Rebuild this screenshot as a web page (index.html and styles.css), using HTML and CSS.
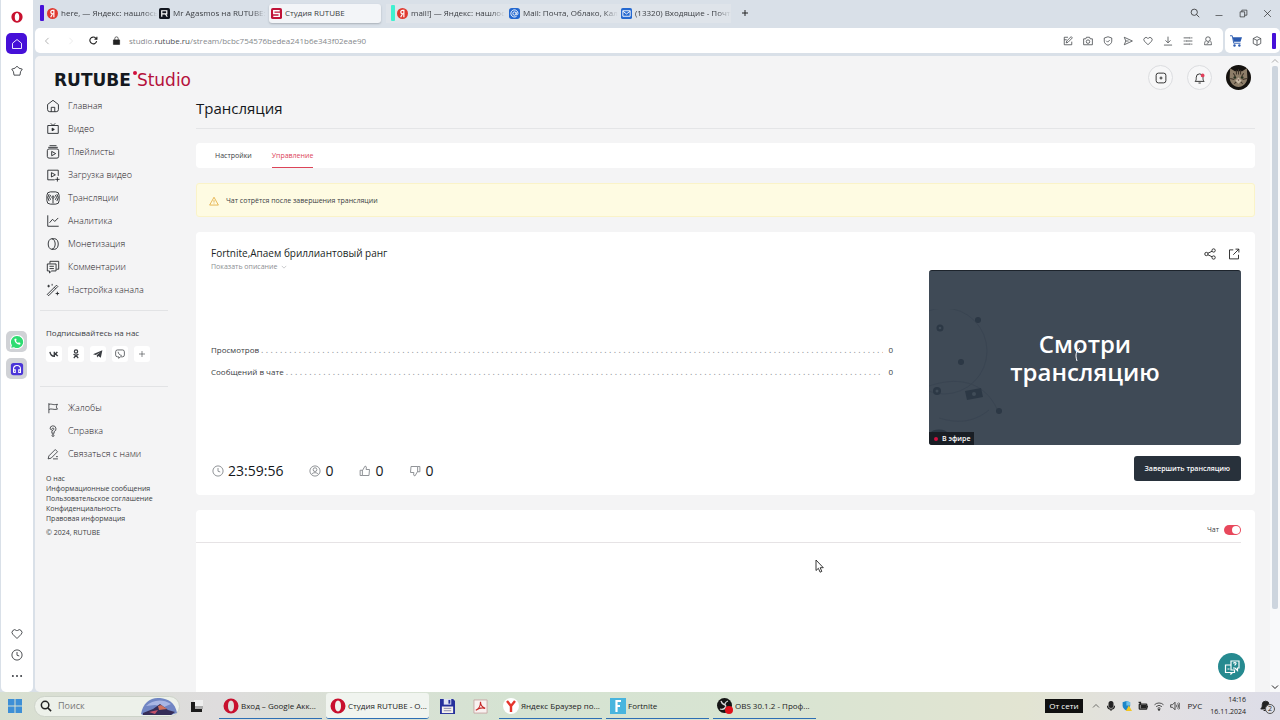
FILE: index.html
```html
<!DOCTYPE html>
<html lang="ru">
<head>
<meta charset="utf-8">
<meta name="viewport" content="width=device-width, initial-scale=1">
<title>Студия RUTUBE</title>
<link rel="stylesheet" href="styles.css">
</head>
<body>
<svg class="sprite" aria-hidden="true">
  <symbol id="opera" viewBox="0 0 16 16"><path fill-rule="evenodd" d="M8 0.5a7.5 7.5 0 1 0 0 15a7.5 7.5 0 1 0 0-15zM8 2.6c2 0 3 2.3 3 5.4s-1 5.4-3 5.4s-3-2.3-3-5.4s1-5.4 3-5.4z" fill="#c8102e" stroke="none"/></symbol>
  <symbol id="home" viewBox="0 0 16 16"><path d="M2 7l6-5l6 5v7H2z"/></symbol>
  <symbol id="star" viewBox="0 0 16 16"><path d="M8 1.500l2.500 2.700l4.500 1.300l-2.300 3.500l-.7 4.500H4L3.300 9L1 5.500l4.500-1.300z"/></symbol>
  <symbol id="heart" viewBox="0 0 16 16"><path d="M8 14L2.4 8.4a3.6 3.6 0 0 1 0-5a3.5 3.5 0 0 1 5 0l.6.6l.6-.6a3.5 3.5 0 0 1 5 0a3.6 3.6 0 0 1 0 5z"/></symbol>
  <symbol id="clock" viewBox="0 0 16 16"><circle cx="8" cy="8" r="6.8"/><path d="M8 4v4.3l3 1"/></symbol>
  <symbol id="dots" viewBox="0 0 16 16"><g fill="currentColor" stroke="none"><circle cx="2.5" cy="8" r="1.3"/><circle cx="8" cy="8" r="1.3"/><circle cx="13.5" cy="8" r="1.3"/></g></symbol>
  <symbol id="search" viewBox="0 0 16 16"><circle cx="6.8" cy="6.8" r="5"/><path d="M10.5 10.5l4.3 4.3"/></symbol>
  <symbol id="minus" viewBox="0 0 16 16"><path d="M1 13h14"/></symbol>
  <symbol id="restore" viewBox="0 0 16 16"><path d="M2 5h8v9H2zM5 5V2h9v9h-4"/></symbol>
  <symbol id="close" viewBox="0 0 16 16"><path d="M2 2l12 12M14 2L2 14"/></symbol>
  <symbol id="plus" viewBox="0 0 16 16"><path d="M8 2v12M2 8h12"/></symbol>
  <symbol id="left" viewBox="0 0 16 16"><path d="M10.5 3L5.5 8l5 5"/></symbol>
  <symbol id="right" viewBox="0 0 16 16"><path d="M5.5 3l5 5l-5 5"/></symbol>
  <symbol id="up" viewBox="0 0 16 16"><path d="M2 11l6-6l6 6"/></symbol>
  <symbol id="down" viewBox="0 0 16 16"><path d="M2 5l6 6l6-6"/></symbol>
  <symbol id="reload" viewBox="0 0 16 16"><path d="M13.5 9a6 6 0 1 1-1.6-5.3l1.6 1.8M14 1.5v4.3h-4.3"/></symbol>
  <symbol id="lock" viewBox="0 0 16 16"><path d="M5 7V4.5a3 3 0 0 1 6 0V7"/><path d="M2.5 7h11v8h-11z" fill="currentColor"/></symbol>
  <symbol id="edit" viewBox="0 0 16 16"><path d="M8 2H2v12h12V9M2 6h4M5 11l1-3l7-7l2 2l-7 7z"/></symbol>
  <symbol id="camera" viewBox="0 0 16 16"><path d="M1 4.5h3.5l1-2.5h5l1 2.5H15V14H1z"/><circle cx="8" cy="9" r="2.8"/></symbol>
  <symbol id="shield" viewBox="0 0 16 16"><path d="M8 1.2l6 2v5c0 3.500-3 5.600-6 6.600c-3-1-6-3.100-6-6.600v-5zM5.200 7.600l2.200 2.200l3.500-3.500"/></symbol>
  <symbol id="send" viewBox="0 0 16 16"><path d="M2 2l13 6L2 14l2.500-6zM4.500 8H9"/></symbol>
  <symbol id="download" viewBox="0 0 16 16"><path d="M8 1v9.500M4 7l4 4l4-4M1.500 14.500h13"/></symbol>
  <symbol id="sliders" viewBox="0 0 16 16"><path d="M1 3h9M13 3h2M1 8h2M6 8h9M1 13h9M13 13h2M11 1.500v3M5 6.500v3M11 11.500v3"/></symbol>
  <symbol id="person" viewBox="0 0 16 16"><circle cx="8" cy="5" r="3.700"/><path d="M4.500 7.500C3 9 2.500 11 2.500 14h11c0-3-.5-5-2-6.500M6 12l4-2"/></symbol>
  <symbol id="cart" viewBox="0 0 16 16"><path d="M0 1h3l2 10h9" stroke="#2a5ab0" fill="none"/><path d="M3.500 3H16l-2 6H5z" fill="#2a5ab0" stroke="none"/><circle cx="6" cy="14" r="1.600" fill="#2a5ab0" stroke="none"/><circle cx="12.500" cy="14" r="1.600" fill="#2a5ab0" stroke="none"/></symbol>
  <symbol id="cube" viewBox="0 0 16 16"><path d="M8 1l6 3v8l-6 3l-6-3V4zM2 4l6 3l6-3M8 7v8"/></symbol>

  <symbol id="n-home" viewBox="0 0 16 16"><path d="M1.800 6.300L8 1.500l6.200 4.800V12a2.500 2.500 0 0 1-2.500 2.500H4.300A2.500 2.500 0 0 1 1.800 12zM6 14.500V9.500h4v5"/></symbol>
  <symbol id="n-video" viewBox="0 0 16 16"><path d="M2 4h12v9H2zM5.500 1.500L8 4l2.500-2.500"/><path d="M7 7l2.500 1.500L7 10z" fill="currentColor"/></symbol>
  <symbol id="n-list" viewBox="0 0 16 16"><rect x="1.500" y="4.500" width="13" height="10.500" rx="2"/><path d="M2.500 2.700h11M4 .8h8M6.500 7.300l4.500 2.500l-4.500 2.500z"/></symbol>
  <symbol id="n-upload" viewBox="0 0 16 16"><path d="M14 9V2.500H2v11h8M6.200 5.300l4.500 2.500l-4.500 2.500zM13 10.500v5M10.500 13h5"/></symbol>
  <symbol id="n-live" viewBox="0 0 16 16"><rect x="1" y="1" width="14" height="14" rx="4"/><circle cx="8" cy="7" r="1.300"/><path d="M8 8.300V14M5.300 10a4 4 0 0 1 0-5.500M10.700 10a4 4 0 0 0 0-5.500M3.600 11.500a6.500 6.500 0 0 1 0-8M12.400 11.500a6.500 6.500 0 0 0 0-8"/></symbol>
  <symbol id="n-chart" viewBox="0 0 16 16"><path d="M2 1.500v12.500h12.500M4 10l3.500-4l2.500 2.500l4-4"/></symbol>
  <symbol id="n-coin" viewBox="0 0 16 16"><ellipse cx="6.500" cy="8" rx="4" ry="6"/><path d="M6.500 2h3.500c2.300 0 4 2.700 4 6s-1.700 6-4 6H6.500"/></symbol>
  <symbol id="n-comment" viewBox="0 0 16 16"><path d="M4.500 4V1.500h10v9H12M1.500 4.500h10v8H6.500L4 14.800v-2.300H1.500zM4 7.200h5M4 9.800h5"/></symbol>
  <symbol id="n-wand" viewBox="0 0 16 16"><path d="M1.500 13L12 2.500L13.500 4L3 14.500zM3 2v3M1.500 3.500h3M13 10v4M11 12h4M7 1v2M9.500 5l1.500 1.500"/></symbol>
  <symbol id="n-flag" viewBox="0 0 16 16"><path d="M2.500 1.500v13.500M2.500 3.500c3-2 5 1.200 11.500-.5c-2 3-2 4 0 6.500c-5 1.500-8-1.500-11.500.5"/></symbol>
  <symbol id="n-help" viewBox="0 0 16 16"><path d="M4 5a4 4 0 1 1 5.500 3.800V11h-3V7.500C10 7 9.500 3.700 7.800 4C6.500 4.200 7 6 5.500 6.200z"/><circle cx="8" cy="14" r="1.300"/></symbol>
  <symbol id="n-pen" viewBox="0 0 16 16"><path d="M1.500 14.500l1-4L11 2l3 3l-8.500 8.500zM8 14.500h6.500M12 11.500h2.500"/></symbol>

  <symbol id="s-vk" viewBox="0 0 16 16"><path d="M1.500 4.500c.7 4 3 7 7 7V4.500M8.500 8c2.500-.3 4-2 4.800-3.500M8.500 8c2.500.3 4.500 2 5.500 3.500" stroke-width="2.200"/></symbol>
  <symbol id="s-ok" viewBox="0 0 16 16"><circle cx="8" cy="4" r="2.600" stroke-width="2"/><path d="M4 8.500c2.500 1.700 5.500 1.700 8 0M8 10l-3.500 4.500M8 10l3.500 4.500" stroke-width="2"/></symbol>
  <symbol id="s-tg" viewBox="0 0 16 16"><path d="M0 8.500L15 2l-2.500 12l-4-3l-2 2.500L6 10l5.500-5L4.500 9.700z" fill="currentColor" stroke="none"/></symbol>
  <symbol id="s-viber" viewBox="0 0 16 16"><path d="M4 1.500h8a3 3 0 0 1 3 3v5a3 3 0 0 1-3 3H8.500L6 15v-2.500H4a3 3 0 0 1-3-3v-5a3 3 0 0 1 3-3zM5 4.500c.3 3 2.500 5.500 5.800 5.800"/></symbol>

  <symbol id="addbox" viewBox="0 0 16 16"><rect x="1.500" y="1.500" width="13" height="13" rx="3"/><path d="M8 6v4M6 8h4"/></symbol>
  <symbol id="bell" viewBox="0 0 16 16"><path d="M1.500 12.500h12c-1.500-1.500-1.500-2.500-1.500-5.500a4.500 4.500 0 0 0-9 0c0 3 0 4-1.500 5.500zM6 14.700h3"/><circle cx="11.500" cy="4.500" r="2.500" fill="#e2405c" stroke="none"/></symbol>
  <symbol id="warn" viewBox="0 0 16 16"><path d="M8 2l7 12.500H1zM8 6.500v4M8 12v1"/></symbol>
  <symbol id="share" viewBox="0 0 16 16"><circle cx="3.200" cy="8" r="2.200"/><circle cx="12.800" cy="3.300" r="2.200"/><circle cx="12.800" cy="12.700" r="2.200"/><path d="M5.200 7l5.600-2.700M5.200 9l5.600 2.700"/></symbol>
  <symbol id="open" viewBox="0 0 16 16"><path d="M7 2.500H2v12h12V9M7 9l7.500-7.500M10 1.500h4.500V6"/></symbol>
  <symbol id="viewer" viewBox="0 0 16 16"><circle cx="8" cy="8" r="6.800"/><circle cx="8" cy="6.200" r="2.500"/><path d="M3.500 12.500c1.500-3 7.500-3 9 0"/></symbol>
  <symbol id="like" viewBox="0 0 16 16"><path d="M1.500 7h3v7h-3zM4.500 7.500L8 1.500c2 0 2 1.500 1.500 4.500H14l-.7 8H4.500"/></symbol>
  <symbol id="dislike" viewBox="0 0 16 16"><path d="M14.500 9h-3V2h3zM11.500 8.500L8 14.500c-2 0-2-1.500-1.500-4.500H2l.7-8h8.800"/></symbol>
  <symbol id="faq" viewBox="0 0 16 16"><path d="M7 6.500V2h8v7h-1.500v2.500L11 9H9M1.500 6H7v5h3.500v2.500H8.500L7 15v-1.500H1.500zM9.500 4.500c.5-1.500 2.800-1 2.500.2c-.2.800-1.200.8-1.200 1.800M3.500 10h2"/></symbol>

  <symbol id="mic" viewBox="0 0 16 16"><rect x="5" y="1" width="6" height="9" rx="3" fill="currentColor"/><path d="M2.500 7.500a5.500 5.500 0 0 0 11 0M8 13v2.500"/></symbol>
  <symbol id="defender" viewBox="0 0 16 16"><path d="M7 0l6 2v5c0 4-3 6.500-6 8c-3-1.500-6-4-6-8V2z" fill="#1c86c8" stroke="none"/><path d="M7 0l6 2v5H7z" fill="#6fc0ea" stroke="none"/><path d="M11 7l5 9H6z" fill="#f3c522" stroke="none"/></symbol>
  <symbol id="battery" viewBox="0 0 16 16"><rect x="2" y="5" width="12" height="8" rx="1"/><path d="M5 7.500h7v3.500H5zM15.500 7.500v3" fill="currentColor"/><path d="M1 1.500l4 2.500M4 1v5"/></symbol>
  <symbol id="wifi" viewBox="0 0 16 16"><path d="M.8 6a10.500 10.500 0 0 1 14.400 0M3.300 9a7 7 0 0 1 9.400 0M5.700 11.700a3.500 3.500 0 0 1 4.600 0"/><circle cx="8" cy="13.800" r="1.200" fill="currentColor"/></symbol>
  <symbol id="sound" viewBox="0 0 16 16"><path d="M1 6h3l4-4v12l-4-4H1zM10 6c1 1.200 1 2.800 0 4M12 4c2 2.400 2 5.600 0 8M14 2.500c2.500 3.500 2.500 7.500 0 11"/></symbol>
</svg>

<div class="desktop">
  <aside class="rail">
    <svg class="i i12"><use href="#opera"/></svg>
    <button class="rail-btn active" aria-label="Домой"><svg class="i i12"><use href="#home"/></svg></button>
    <button class="rail-btn" aria-label="Закладки"><svg class="i i12"><use href="#star"/></svg></button>
    <div class="rail-apps">
      <button class="rail-btn app" aria-label="WhatsApp"><svg class="i i14" viewBox="0 0 16 16"><path d="M8 .5a7.500 7.500 0 1 1-3.600 14L.5 15.500l1-3.700A7.500 7.500 0 0 1 8 .5z" fill="#2fdc72" stroke="#fff"/><path d="M5 4.500c0 3.500 3 6.500 6.500 6.500l.5-2l-2-.8l-.8.800C8 8.500 7.300 7.800 6.800 6.600l.8-.8L7 4z" fill="#fff" stroke="none"/></svg></button>
      <button class="rail-btn app" aria-label="Плеер"><svg class="i i14" viewBox="0 0 16 16"><rect x="1" y="1" width="14" height="14" rx="3" fill="#4a35d8" stroke="none"/><path d="M4 12V8a4 4 0 0 1 8 0v4h-2V9h2M4 9h2v3H4" stroke="#fff"/></svg></button>
    </div>
    <div class="rail-bottom">
      <button class="rail-btn" aria-label="Избранное"><svg class="i i12"><use href="#heart"/></svg></button>
      <button class="rail-btn" aria-label="История"><svg class="i i12"><use href="#clock"/></svg></button>
      <button class="rail-btn" aria-label="Ещё"><svg class="i i12"><use href="#dots"/></svg></button>
    </div>
  </aside>

  <div class="browser">
    <header class="tabs">
      <div class="group purple">
        <div class="tab"><svg class="fav" viewBox="0 0 12 12"><circle cx="6" cy="6" r="6" fill="#e0392f"/><path d="M7.500 10V2.500H6C3.500 2.500 3.500 6.300 6 6.300h1.500M6 6.300L4 10" fill="none" stroke="#fff" stroke-width="1.300"/></svg><span>here, — Яндекс: нашлось</span></div>
        <div class="tab"><svg class="fav" viewBox="0 0 12 12"><rect width="12" height="12" rx="2" fill="#12161f"/><path d="M3 9.500V3h5.500v3.500H3M7 6.500l2 3" fill="none" stroke="#fff" stroke-width="1.300"/></svg><span>Mr Agasmos на RUTUBE:</span></div>
        <div class="tab current"><svg class="fav" viewBox="0 0 12 12"><rect width="12" height="12" rx="2" fill="#c01338"/><path d="M9.500 3H3v3h6v3.200H2.500" fill="none" stroke="#fff" stroke-width="1.500"/></svg><span>Студия RUTUBE</span></div>
      </div>
      <div class="group teal">
        <div class="tab"><svg class="fav" viewBox="0 0 12 12"><circle cx="6" cy="6" r="6" fill="#e0392f"/><path d="M7.500 10V2.500H6C3.500 2.500 3.500 6.300 6 6.300h1.500M6 6.300L4 10" fill="none" stroke="#fff" stroke-width="1.300"/></svg><span>mail!] — Яндекс: нашлос</span></div>
        <div class="tab"><svg class="fav" viewBox="0 0 12 12"><rect width="12" height="12" rx="3" fill="#2468d0"/><circle cx="6" cy="6" r="1.800" fill="none" stroke="#fff"/><path d="M7.800 4.500v2c0 1.500 2 1.300 2-.5A3.900 3.900 0 1 0 8.300 9" fill="none" stroke="#fff"/></svg><span>Mail: Почта, Облако, Кал</span></div>
        <div class="tab"><svg class="fav" viewBox="0 0 12 12"><rect width="12" height="12" rx="2" fill="#2468d0"/><path d="M2 3h8v6H2zM2 3.500l4 3l4-3" fill="none" stroke="#fff"/></svg><span>(13320) Входящие - Почт</span></div>
      </div>
      <button class="slot" aria-label="Новая вкладка"><svg class="i i8 bold"><use href="#plus"/></svg></button>
      <div class="window-btns">
        <button class="slot" aria-label="Поиск вкладок"><svg class="i i10"><use href="#search"/></svg></button>
        <button class="slot" aria-label="Свернуть"><svg class="i i8"><use href="#minus"/></svg></button>
        <button class="slot" aria-label="Восстановить"><svg class="i i9"><use href="#restore"/></svg></button>
        <button class="slot" aria-label="Закрыть"><svg class="i i9"><use href="#close"/></svg></button>
      </div>
    </header>

    <div class="toolbar">
      <div class="address">
        <button class="slot faint" aria-label="Назад"><svg class="i i10"><use href="#left"/></svg></button>
        <button class="slot fainter" aria-label="Вперёд"><svg class="i i10"><use href="#right"/></svg></button>
        <button class="slot reload" aria-label="Обновить"><svg class="i i9 bold"><use href="#reload"/></svg></button>
        <svg class="i i9 lock"><use href="#lock"/></svg>
        <div class="url">studio.<b>rutube.ru</b>/stream/bcbc754576bedea241b6e343f02eae90</div>
        <div class="tools">
          <button aria-label="Заметка"><svg class="i i10"><use href="#edit"/></svg></button>
          <button aria-label="Снимок"><svg class="i i10"><use href="#camera"/></svg></button>
          <button aria-label="Защита"><svg class="i i10"><use href="#shield"/></svg></button>
          <button aria-label="Отправить"><svg class="i i10"><use href="#send"/></svg></button>
          <button aria-label="Избранное"><svg class="i i10"><use href="#heart"/></svg></button>
          <button aria-label="Загрузки"><svg class="i i10"><use href="#download"/></svg></button>
          <button aria-label="Настройки"><svg class="i i10"><use href="#sliders"/></svg></button>
          <button aria-label="Профиль"><svg class="i i10"><use href="#person"/></svg></button>
        </div>
      </div>
      <div class="extras">
        <button aria-label="Покупки"><svg class="i i12"><use href="#cart"/></svg></button>
        <button aria-label="Расширения"><svg class="i i10"><use href="#cube"/></svg></button>
        <span class="accent"></span>
      </div>
    </div>

    <div class="page">
      <div class="side">
        <a class="logo" href="#"><b>RUTUBE</b><i></i><span>Studio</span></a>
        <nav class="menu">
          <a href="#"><svg class="i i14"><use href="#n-home"/></svg>Главная</a>
          <a href="#"><svg class="i i14"><use href="#n-video"/></svg>Видео</a>
          <a href="#"><svg class="i i14"><use href="#n-list"/></svg>Плейлисты</a>
          <a href="#"><svg class="i i14"><use href="#n-upload"/></svg>Загрузка видео</a>
          <a href="#"><svg class="i i14"><use href="#n-live"/></svg>Трансляции</a>
          <a href="#"><svg class="i i14"><use href="#n-chart"/></svg>Аналитика</a>
          <a href="#"><svg class="i i14"><use href="#n-coin"/></svg>Монетизация</a>
          <a href="#"><svg class="i i14"><use href="#n-comment"/></svg>Комментарии</a>
          <a href="#"><svg class="i i14"><use href="#n-wand"/></svg>Настройка канала</a>
        </nav>
        <section class="follow">
          <p>Подписывайтесь на нас</p>
          <div class="social">
            <a href="#" aria-label="ВКонтакте"><svg class="i i10"><use href="#s-vk"/></svg></a>
            <a href="#" aria-label="Одноклассники"><svg class="i i10"><use href="#s-ok"/></svg></a>
            <a href="#" aria-label="Telegram"><svg class="i i10"><use href="#s-tg"/></svg></a>
            <a href="#" aria-label="Viber"><svg class="i i10"><use href="#s-viber"/></svg></a>
            <a href="#" aria-label="Ещё"><svg class="i i8"><use href="#plus"/></svg></a>
          </div>
        </section>
        <nav class="menu extra">
          <a href="#"><svg class="i i12"><use href="#n-flag"/></svg>Жалобы</a>
          <a href="#"><svg class="i i12"><use href="#n-help"/></svg>Справка</a>
          <a href="#"><svg class="i i12"><use href="#n-pen"/></svg>Связаться с нами</a>
        </nav>
        <nav class="legal">
          <a href="#">О нас</a>
          <a href="#">Информационные сообщения</a>
          <a href="#">Пользовательское соглашение</a>
          <a href="#">Конфиденциальность</a>
          <a href="#">Правовая информация</a>
          <p>© 2024, RUTUBE</p>
        </nav>
      </div>

      <main class="content">
        <div class="account">
          <button class="round" aria-label="Добавить"><svg class="i i12"><use href="#addbox"/></svg></button>
          <button class="round" aria-label="Уведомления"><svg class="i i12"><use href="#bell"/></svg></button>
          <button class="avatar" aria-label="Профиль"><svg viewBox="0 0 24 24"><circle cx="12" cy="12" r="12" fill="#15120f"/><path d="M4 3l4.500 3h7L20 3l.5 9c0 5-4 9-8.500 9s-8.500-4-8.500-9z" fill="#8d7d68"/><path d="M7 8l2 3M10 5v4M12 4v5M14 5v4M17 8l-2 3M4 13l4 1M20 13l-4 1M8 18l2-2M16 18l-2-2" stroke="#3c3228" stroke-width="1"/><path d="M9 15l3-3l3 3l-3 3z" fill="#c5b7a2"/><circle cx="8.500" cy="12" r="1.300" fill="#26301f"/><circle cx="15.500" cy="12" r="1.300" fill="#26301f"/><path d="M11 14h2l-1 1.300z" fill="#5c3a34"/></svg></button>
        </div>
        <h1>Трансляция</h1>
        <nav class="subtabs"><a href="#">Настройки</a><a href="#" class="on">Управление</a></nav>
        <div class="notice"><svg class="i i10"><use href="#warn"/></svg>Чат сотрётся после завершения трансляции</div>

        <section class="card stream">
          <div class="info">
            <h2>Fortnite,Апаем бриллиантовый ранг</h2>
            <button class="more">Показать описание <svg class="i i6"><use href="#down"/></svg></button>
            <dl>
              <div><dt>Просмотров</dt><dd>0</dd></div>
              <div><dt>Сообщений в чате</dt><dd>0</dd></div>
            </dl>
            <div class="counters">
              <span><svg class="i i12"><use href="#clock"/></svg>23:59:56</span>
              <span><svg class="i i12"><use href="#viewer"/></svg>0</span>
              <span><svg class="i i12"><use href="#like"/></svg>0</span>
              <span><svg class="i i12"><use href="#dislike"/></svg>0</span>
            </div>
          </div>
          <div class="preview">
            <div class="links">
              <button aria-label="Поделиться"><svg class="i i12"><use href="#share"/></svg></button>
              <button aria-label="Открыть"><svg class="i i12"><use href="#open"/></svg></button>
            </div>
            <div class="video">
              <svg class="orbit" viewBox="0 0 110 130"><g fill="none" stroke="#3a4552" stroke-width="1"><circle cx="15" cy="42" r="43"/><path d="M0 77c35-12 60 0 70 28M10 109c20 6 35 4 50-8"/></g><g fill="#2c3845"><circle cx="11" cy="19" r="3.500"/><circle cx="49" cy="11" r="3"/><circle cx="32" cy="53" r="3"/><circle cx="8" cy="82" r="4"/><circle cx="70" cy="102" r="3"/><path d="M36 82l16-3l2 9l-16 3z"/><path d="M1 124a10 6 0 0 1 18 0z"/></g><g fill="#404c58"><circle cx="11" cy="19" r="1.300"/><circle cx="8" cy="82" r="1.500"/><circle cx="45" cy="85" r="2"/></g></svg>
              <p>Смотри<br>трансляцию</p>
              <svg class="spin" viewBox="0 0 6 16"><path d="M5 1C1 4 0 8 2 14" fill="none" stroke="#fff"/></svg>
              <span class="onair">В эфире</span>
            </div>
            <button class="finish">Завершить трансляцию</button>
          </div>
        </section>

        <section class="card chat">
          <div class="chat-head"><label for="chat">Чат</label><input id="chat" type="checkbox" role="switch" checked></div>
        </section>
      </main>
      <div class="scroll" aria-hidden="true">
        <svg class="i i8"><use href="#up"/></svg>
        <div class="track"><div class="thumb"></div></div>
        <svg class="i i8 bold"><use href="#down"/></svg>
      </div>
      <button class="support" aria-label="Поддержка"><svg class="i i16"><use href="#faq"/></svg></button>
    </div>
  </div>

  <footer class="taskbar">
    <button class="start" aria-label="Пуск"><svg viewBox="0 0 14 14"><path d="M0 0h6.500v6.500H0zM7.500 0H14v6.500H7.500zM0 7.500h6.500V14H0zM7.500 7.500H14V14H7.500z" fill="#3d8fd6"/></svg></button>
    <div class="find"><svg class="i i12 bold"><use href="#search"/></svg><input type="text" placeholder="Поиск" aria-label="Поиск"><svg class="pic" viewBox="0 0 36 18"><path d="M0 17C2 5 10 0 19 1c8 1 15 4 17 15l-6 2H2z" fill="#7186c4"/><path d="M5 9c6-6 16-8 25-2l-7 3l-9-2z" fill="#a9b6e4"/><path d="M2 16l10-4l7-5l8 6l7 2l-4 3H2z" fill="#352d58"/><path d="M17 9l3-1l6 4l-8 1z" fill="#d0705c"/><path d="M8 15l9-2l-3 4z" fill="#c4526a"/></svg></div>
    <button class="view" aria-label="Представление задач"><svg viewBox="0 0 14 14"><path d="M4 1h9v9H4z" fill="#eee"/><path d="M1 3h4v6h7v4H1z" fill="#1b1b1b"/><path d="M5 7h8v3H5z" fill="#aaa"/></svg></button>
    <div class="tasks">
      <button class="task open"><svg class="i i16"><use href="#opera"/></svg><span>Вход – Google Акк...</span></button>
      <button class="task open front"><svg class="i i16"><use href="#opera"/></svg><span>Студия RUTUBE - O...</span></button>
      <button class="pin" aria-label="Сохранение"><svg viewBox="0 0 16 16"><path d="M0 0h14l2 2v14H0z" fill="#26309c"/><path d="M4 0h8v6H4z" fill="#dfe3f5"/><path d="M9 1h2v4H9z" fill="#26309c"/><path d="M2 8h12v7H2z" fill="#f5f0ee"/><path d="M4 10h8M4 12.500h8" stroke="#8a8aa8"/></svg></button>
      <button class="pin" aria-label="PDF"><svg viewBox="0 0 16 16"><path d="M1 1h14v14H1z" fill="#f8f1f0" stroke="#c9a8a5"/><path d="M3 12c3-1 5-5 5-9c0 4 2 6 5 7c-3-1-7 0-10 2z" fill="none" stroke="#c62828" stroke-width="1.200"/></svg></button>
      <button class="task open"><svg class="i i16" viewBox="0 0 16 16"><circle cx="8" cy="8" r="8" fill="#fff" stroke="none"/><path d="M4 3l4 5l4-5M8 8v6" stroke="#e5342b" stroke-width="2.400"/></svg><span>Яндекс Браузер по...</span></button>
      <button class="task open"><svg class="i i16" viewBox="0 0 16 16"><path d="M0 0h16v16H0z" fill="#48b5de" stroke="none"/><path d="M6.500 14V3H11M6.500 8h3.500" stroke="#fff" stroke-width="2.200"/></svg><span>Fortnite</span></button>
      <button class="task open"><svg class="i i16" viewBox="0 0 16 16"><circle cx="7.500" cy="7.500" r="7.500" fill="#151515" stroke="none"/><path d="M4 3c1 4 4 3 5 5M11 3c-3 1-4 4-2 5M3 11c3 1 5 0 6-3" stroke="#ddd" stroke-width="1.300"/><circle cx="12" cy="12" r="4" fill="#e0101c" stroke="none"/></svg><span>OBS 30.1.2 - Проф...</span></button>
    </div>
    <div class="tray">
      <span class="power">От сети</span>
      <svg class="i i8"><use href="#up"/></svg>
      <svg class="i i10 bold"><use href="#mic"/></svg>
      <svg class="i i10"><use href="#defender"/></svg>
      <svg class="i i10 bold"><use href="#battery"/></svg>
      <svg class="i i10"><use href="#wifi"/></svg>
      <svg class="i i10"><use href="#sound"/></svg>
      <span class="lang">РУС</span>
      <time datetime="2024-11-16T14:16">14:16<br>16.11.2024</time>
      <span class="alerts"><svg class="i i12" viewBox="0 0 16 16"><path d="M1 12h13c-2-2-2-3-2-6a4.500 4.500 0 0 0-9 0c0 3 0 4-2 6zM5 14h4z" fill="currentColor"/></svg><em>2</em></span>
    </div>
  </footer>
</div>
<svg class="cursor" viewBox="0 0 9 14" aria-hidden="true"><path d="M1 1v10.500l2.400-2.200l1.700 3.900l1.700-.8l-1.600-3.700H8.300z" fill="#fff" stroke="#222" stroke-width=".9"/></svg>
</body>
</html>
```

FILE: styles.css
```css
* { box-sizing: border-box; }

body, h1, h2, p, dl, dd { margin: 0; }

body {
  font-family: "Open Sans", "Noto Sans", sans-serif;
  font-size: 8px;
  line-height: 12px;
  color: #3a3d42;
  background: #d9e0e8;
}

button, input { font: inherit; color: inherit; }

button {
  display: flex;
  align-items: center;
  justify-content: center;
  padding: 0;
  border: 0;
  background: none;
}

a { color: inherit; text-decoration: none; }

.sprite { position: absolute; width: 0; height: 0; }

.i {
  flex: none;
  fill: none;
  stroke: currentColor;
  stroke-width: 1.2;
}
.i.bold { stroke-width: 2; }
.i6 { width: 6px; height: 6px; }
.i8 { width: 8px; height: 8px; }
.i9 { width: 9px; height: 9px; }
.i10 { width: 10px; height: 10px; }
.i12 { width: 12px; height: 12px; }
.i14 { width: 14px; height: 14px; }
.i16 { width: 16px; height: 16px; }

.desktop {
  display: grid;
  grid-template: minmax(0, 1fr) 28px / 35px minmax(0, 1fr);
  height: 100vh;
}

/* Opera side rail */
.rail {
  display: flex;
  flex-direction: column;
  align-items: center;
  gap: 6px;
  margin: 0 2px 0 1px;
  padding: 11px 1px 6px 0;
  background: #fff;
  border-radius: 0 0 5px 5px;
}
.rail-btn { width: 21px; height: 21px; border-radius: 5px; }
.rail-btn.active { margin-top: 4px; background: #4610d8; color: #fff; }
.rail-btn.app { background: #d0d2d6; }
.rail-apps { display: grid; gap: 6px; margin: auto 0; padding-top: 6px; }
.rail-bottom { display: grid; }

/* Browser chrome */
.browser { display: flex; flex-direction: column; min-width: 0; min-height: 0; }

.tabs { display: flex; align-items: center; height: 28px; padding: 0 1px 2px 5px; }
.group { display: flex; align-items: center; margin-right: 5px; }
.group::before { content: ""; width: 4px; height: 16px; margin-right: 1px; border-radius: 1px; background: #4610d8; }
.group.teal { background: #dfe4ea; margin: 0 2px 0 0; padding-left: 5px; }
.group.teal::before { background: #3ff0d0; margin: 0; }
.tab {
  display: flex;
  align-items: center;
  gap: 3px;
  width: 112px;
  height: 19px;
  padding: 0 0 0 2px;
}
.tab.current { background: #f3f5f8; border-radius: 3px; box-shadow: 0 1px 2px #a9b0b8; }
.tab span {
  white-space: nowrap;
  mask-image: linear-gradient(90deg, #000 85%, transparent);
}
.tab.current span { mask-image: none; }
.fav { flex: none; width: 11px; height: 11px; }
.slot { width: 24px; height: 20px; color: #222; }
.window-btns { display: flex; margin-left: auto; }

.toolbar { display: flex; gap: 2px; height: 25px; }
.address, .extras { display: flex; align-items: center; background: #fff; border-radius: 5px; }
.address { flex: 1; min-width: 0; }
.faint { color: #9a9a9a; }
.fainter { color: #e6e6e6; }
.reload { width: 20px; }
.lock { margin: 0 8px 0 9px; color: #222; }
.url { color: #85888c; }
.url b { font-weight: 400; color: #4c4f54; }
.tools { display: flex; margin-left: auto; padding-right: 5px; }
.tools button { width: 20px; height: 20px; }
.extras { gap: 10px; padding: 0 4px 0 5px; }
.accent { width: 4px; height: 16px; border-radius: 1px; background: #4610d8; }

/* Page */
.page {
  position: relative;
  display: flex;
  flex: 1;
  min-height: 0;
  margin-top: 3px;
  background: #f4f4f5;
  border-radius: 5px 0 0 5px;
  overflow: hidden;
}
.side { flex: none; width: 161px; padding: 12px 0 0 11px; }

.logo {
  display: flex;
  align-items: center;
  height: 24px;
  padding-left: 8px;
  font: 17px/24px "DejaVu Sans", sans-serif;
  color: #b4123c;
}
.logo b { color: #14191f; }
.logo i { width: 4px; height: 4px; margin: 0 0 14px 2px; border-radius: 2px; background: #d0103c; }

.menu { display: flex; flex-direction: column; padding-top: 2px; font-size: 9px; font-weight: 300; color: #1f2226; }
.menu.extra { padding-top: 0; }
.menu a { display: flex; align-items: center; gap: 8px; height: 23px; }
.menu .i { stroke-width: 1; }
.menu .i12 { margin: 0 1px; }

.follow {
  width: 128px;
  height: 77px;
  margin: 9px 0 9px -6px;
  padding: 16px 0 0 6px;
  border: solid #e2e3e5;
  border-width: 1px 0;
}
.social { display: flex; gap: 6px; padding-top: 7px; }
.social a { display: grid; place-items: center; width: 16px; height: 16px; border-radius: 3px; background: #fff; }

.legal { display: flex; flex-direction: column; padding-top: 9px; font-size: 7px; line-height: 10px; }
.legal p { padding-top: 4px; }

.content { display: flex; flex-direction: column; flex: 1; min-width: 0; padding: 9px 15px 0 0; }
.account { display: flex; gap: 14px; justify-content: flex-end; padding-right: 4px; }
.round { width: 25px; height: 25px; border: 1px solid #dcdde0; border-radius: 50%; background: #f7f7f8; color: #222; }
.avatar svg { width: 25px; height: 25px; }

h1 {
  margin-bottom: 14px;
  padding: 8px 0 10px;
  border-bottom: 1px solid #e4e5e7;
  font-size: 15px;
  font-weight: 400;
  line-height: 20px;
  color: #14171b;
}

.subtabs { display: flex; gap: 20px; height: 25px; padding-left: 19px; background: #fff; border-radius: 4px; font-size: 7px; line-height: 25px; }
.subtabs .on { color: #dc4458; border-bottom: 1px solid #dc4458; }

.notice {
  display: flex;
  align-items: center;
  gap: 7px;
  height: 34px;
  margin: 15px 0;
  padding: 1px 0 0 12px;
  background: #fefbe2;
  border: 1px solid #faf3c8;
  border-radius: 3px;
  font-size: 7px;
}
.notice .i { color: #e0a32c; }

.card { background: #fff; border-radius: 4px; }
.stream { display: flex; gap: 36px; padding: 14px 14px 14px 15px; }
.info { display: flex; flex-direction: column; flex: 1; min-width: 0; }
h2 { font-size: 10px; font-weight: 500; line-height: 14px; color: #1b1f24; }
.more { align-self: flex-start; gap: 4px; height: 14px; font-size: 7px; color: #8b8e92; }

dl { display: grid; grid-template-columns: minmax(0, 1fr); gap: 10px; margin: auto 0; padding-bottom: 14px; }
dl div { display: flex; gap: 5px; }
dt { display: flex; flex: 1; gap: 2px; min-width: 0; overflow: hidden; white-space: nowrap; }
dt::after {
  content: ". . . . . . . . . . . . . . . . . . . . . . . . . . . . . . . . . . . . . . . . . . . . . . . . . . . . . . . . . . . . . . . . . . . . . . . . . . . . . . . . . . . . . . . . . . . . . . . . . . . . . . . . . . . . . . . . . . . . . . . . . . . . . . . . . . . . . . . . . . . . . . . . . . . . . . . . . . . . . . . .";
  font-size: 9px;
  color: #8b8e92;
}

.counters { display: flex; gap: 26px; padding-left: 1px; font-size: 14px; line-height: 20px; color: #14171b; }
.counters span { display: flex; align-items: center; gap: 4px; }
.counters .i { color: #85888c; }

.preview { width: 312px; }
.links { display: flex; align-items: flex-start; justify-content: flex-end; gap: 12px; height: 24px; padding: 2px 1px 0 0; color: #222; }
.video {
  position: relative;
  display: grid;
  place-items: center;
  aspect-ratio: 312 / 175;
  border-top: 1px solid #1d242c;
  border-radius: 3px;
  background: #3f4a56;
  color: #fff;
  overflow: hidden;
}
.video p { font-size: 24px; font-weight: 600; line-height: 28px; text-align: center; }
.orbit { position: absolute; left: 0; bottom: 6px; width: 110px; }
.spin { position: absolute; left: 146px; top: 76px; width: 6px; height: 16px; }
.onair {
  position: absolute;
  left: 0;
  bottom: 0;
  padding: 0 4px 0 13px;
  background: #191e25;
  font-size: 7px;
  font-weight: 600;
  line-height: 13px;
}
.onair::before { content: ""; position: absolute; left: 5px; top: 5px; width: 4px; height: 4px; border-radius: 2px; background: #d01040; }
.finish {
  height: 25px;
  margin: 11px 0 0 auto;
  padding: 0 11px;
  border-radius: 3px;
  background: #28313b;
  color: #fff;
  font-size: 7px;
  font-weight: 600;
}

.chat { flex: 1; margin-top: 15px; border-radius: 4px 4px 0 0; }
.chat-head {
  display: flex;
  align-items: center;
  justify-content: flex-end;
  gap: 5px;
  height: 33px;
  margin-right: 14px;
  padding-top: 7px;
  border-bottom: 1px solid #e6e3e5;
  font-size: 7px;
}
.chat-head input {
  appearance: none;
  display: flex;
  width: 17px;
  height: 10px;
  margin: 0;
  padding: 1px;
  border-radius: 5px;
  background: #e8485c;
}
.chat-head input::before { content: ""; width: 8px; height: 8px; margin-left: auto; border-radius: 4px; background: #fff; }

.scroll { display: flex; flex-direction: column; align-items: center; width: 10px; padding: 1px 0; background: #f8f9fa; color: #777; }
.scroll .bold { color: #222; }
.track { flex: 1; padding-top: 1px; }
.thumb { width: 6px; height: 88%; border-radius: 2px; background: #cdd5de; }

.support {
  position: absolute;
  right: 35px;
  bottom: 12px;
  width: 27px;
  height: 27px;
  border-radius: 50%;
  background: #268a90;
  color: #fff;
}

/* Windows taskbar */
.taskbar {
  grid-column: 1 / -1;
  display: flex;
  align-items: center;
  padding: 0 6px 0 8px;
  background: linear-gradient(90deg, #d8e0d0, #dedcdd 17%, #dadfd6 24%, #d5e3d2 40%, #d8e4d2 60%, #e2e4d2 80%, #e2e0e2 90%, #dddde8);
  color: #222;
}
.start svg, .view svg { display: block; width: 14px; height: 14px; }
.find {
  display: flex;
  align-items: center;
  gap: 6px;
  width: 146px;
  height: 21px;
  margin: 0 10px 0 12px;
  padding: 0 2px 0 5px;
  border: 1px solid #cdd3c9;
  border-radius: 11px;
  background: #edf1ea;
}
.find input { flex: 1; min-width: 0; padding: 0; border: 0; background: none; outline: 0; font-size: 9px; }
.find input::placeholder { color: #777; opacity: 1; }
.pic { width: 36px; height: 18px; }

.tasks { display: flex; align-items: center; gap: 4px; height: 100%; margin-left: 15px; }
.task { justify-content: flex-start; gap: 2px; width: 103px; height: 26px; padding: 0 4px; white-space: nowrap; }
.task.open { border-bottom: 1px solid #2d6fb4; }
.task.front { background: #f0f4ef; border-radius: 3px; }
.pin { width: 29px; height: 26px; }
.pin svg { width: 15px; height: 15px; }

.tray { display: flex; align-items: center; gap: 6px; margin-left: auto; }
.power { margin-right: 3px; padding: 0 4px; background: #101010; color: #fff; line-height: 14px; }
.lang { padding: 0 2px; }
.tray time { text-align: right; font-size: 7px; line-height: 12px; }
.alerts { position: relative; display: flex; margin: 0 2px 0 8px; }
.alerts em {
  position: absolute;
  left: 5px;
  top: 4px;
  width: 10px;
  height: 10px;
  border: 1px solid #555;
  border-radius: 50%;
  background: #dcdde4;
  font-size: 7px;
  font-style: normal;
  line-height: 8px;
  text-align: center;
}

.cursor { position: absolute; left: 815px; top: 559px; width: 9px; height: 14px; }
```
